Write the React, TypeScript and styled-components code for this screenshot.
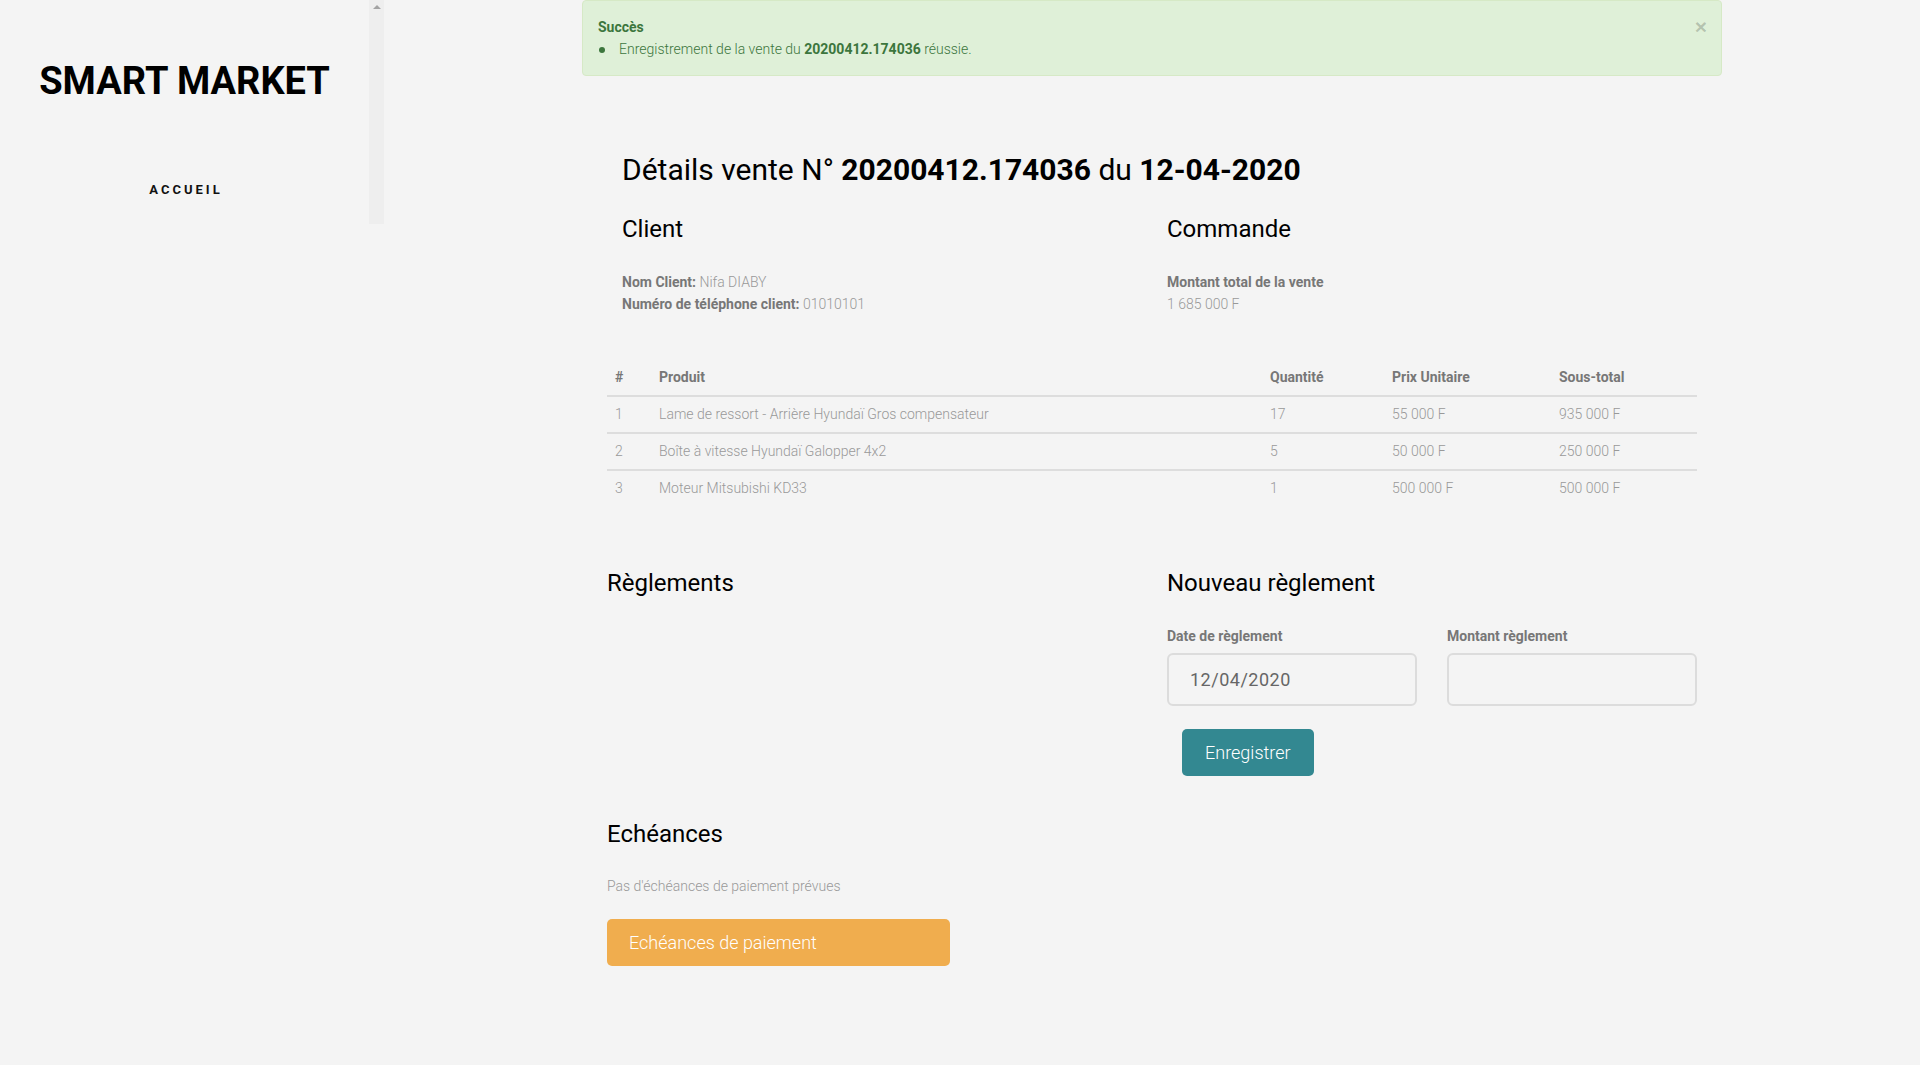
import styled, { createGlobalStyle } from 'styled-components';

const GlobalStyle = createGlobalStyle`
  html, body {
    margin: 0;
    padding: 0;
    background: #f4f4f4;
    font-family: Roboto, "Liberation Sans", sans-serif;
    color: #000;
  }
  * {
    box-sizing: border-box;
  }
`;

type Line = { id: number; name: string; qty: number; price: string; total: string };

const lines: Array<Line> = [
  { id: 1, name: 'Lame de ressort - Arrière Hyundaï Gros compensateur', qty: 17, price: '55 000 F', total: '935 000 F' },
  { id: 2, name: 'Boîte à vitesse Hyundaï Galopper 4x2', qty: 5, price: '50 000 F', total: '250 000 F' },
  { id: 3, name: 'Moteur Mitsubishi KD33', qty: 1, price: '500 000 F', total: '500 000 F' },
];

const columns = [
  { label: '#', width: 44 },
  { label: 'Produit', width: 611 },
  { label: 'Quantité', width: 122 },
  { label: 'Prix Unitaire', width: 167 },
  { label: 'Sous-total', width: 146 },
];

export default function App() {
  return (
    <>
      <GlobalStyle />
      <Page>
        <Sidebar />
        <Main>
          <Container>
            <SuccessAlert />
            <Content>
              <Title>
                Détails vente N° <strong>20200412.174036</strong> du <strong>12-04-2020</strong>
              </Title>
              <TwoCols>
                <Col $inset>
                  <SectionTitle>Client</SectionTitle>
                  <InfoLine>
                    <b>Nom Client:</b> Nifa DIABY
                  </InfoLine>
                  <InfoLine>
                    <b>Numéro de téléphone client:</b> 01010101
                  </InfoLine>
                </Col>
                <Col $inset>
                  <SectionTitle>Commande</SectionTitle>
                  <InfoLine>
                    <b>Montant total de la vente</b>
                  </InfoLine>
                  <InfoLine>1 685 000 F</InfoLine>
                </Col>
              </TwoCols>
              <LinesTable lines={lines} />
              <TwoCols>
                <Col>
                  <SectionTitle>Règlements</SectionTitle>
                </Col>
                <Col $inset>
                  <SectionTitle $gap={28}>Nouveau règlement</SectionTitle>
                  <FormGrid>
                    <Field>
                      <FieldLabel>Date de règlement</FieldLabel>
                      <TextInput defaultValue="12/04/2020" $spaced />
                    </Field>
                    <Field>
                      <FieldLabel>Montant règlement</FieldLabel>
                      <TextInput defaultValue="" />
                    </Field>
                  </FormGrid>
                  <Button $color="#338891" $indent>
                    Enregistrer
                  </Button>
                </Col>
              </TwoCols>
              <Schedules>
                <SectionTitle>Echéances</SectionTitle>
                <Muted>Pas d'échéances de paiement prévues</Muted>
                <Button $color="#f0ad4e" $wide>
                  Echéances de paiement
                </Button>
              </Schedules>
            </Content>
          </Container>
        </Main>
      </Page>
    </>
  );
}

const Sidebar = () => (
  <SideWrapper>
    <SideNav>
      <SideBody>
        <Brand>SMART MARKET</Brand>
        <NavLink>ACCUEIL</NavLink>
      </SideBody>
      <ScrollTrack>
        <ScrollArrow />
      </ScrollTrack>
    </SideNav>
  </SideWrapper>
);

const SuccessAlert = () => (
  <Alert>
    <AlertTitle>Succès</AlertTitle>
    <AlertList>
      <li>
        Enregistrement de la vente du <strong>20200412.174036</strong> réussie.
      </li>
    </AlertList>
    <CloseButton aria-label="close">×</CloseButton>
  </Alert>
);

const LinesTable = ({ lines }: { lines: Array<Line> }) => (
  <Table>
    <thead>
      <tr>
        {columns.map((c) => (
          <Th key={c.label} $width={c.width}>
            {c.label}
          </Th>
        ))}
      </tr>
    </thead>
    <tbody>
      {lines.map((l) => (
        <tr key={l.id}>
          <Td>{l.id}</Td>
          <Td>{l.name}</Td>
          <Td>{l.qty}</Td>
          <Td>{l.price}</Td>
          <Td>{l.total}</Td>
        </tr>
      ))}
    </tbody>
  </Table>
);

const Page = styled.div`
  display: flex;
  min-height: 1065px;
`;

const SideWrapper = styled.aside`
  width: 384px;
  flex-shrink: 0;
`;

const SideNav = styled.nav`
  display: flex;
  height: 224px;
`;

const SideBody = styled.div`
  flex: 1;
  display: flex;
  flex-direction: column;
  align-items: center;
  padding-top: 58px;
`;

const Brand = styled.h1`
  margin: 0;
  font-size: 38px;
  line-height: 46px;
  font-weight: 700;
  color: #000;
`;

const NavLink = styled.a`
  margin-top: 77px;
  padding-left: 3px;
  font-size: 13px;
  line-height: 18px;
  font-weight: 700;
  letter-spacing: 3px;
  color: #111;
  cursor: pointer;
`;

const ScrollTrack = styled.div`
  width: 15px;
  background: #eeeeee;
  display: flex;
  justify-content: center;
  padding-top: 5px;
`;

const ScrollArrow = styled.span`
  width: 0;
  height: 0;
  border-left: 4px solid transparent;
  border-right: 4px solid transparent;
  border-bottom: 4px solid #a3a3a3;
`;

const Main = styled.main`
  flex: 1;
`;

const Container = styled.div`
  width: 1140px;
  margin: 0 auto;
`;

const Alert = styled.div`
  position: relative;
  height: 76px;
  padding: 15px 15px;
  background: #dff0d8;
  border: 1px solid #d6e9c6;
  border-radius: 4px;
  color: #3c763d;
  font-size: 14px;
  line-height: 22px;
`;

const AlertTitle = styled.div`
  font-weight: 700;
`;

const AlertList = styled.ul`
  margin: 0;
  padding: 0;
  list-style: none;
  font-weight: 300;

  li::before {
    content: '';
    display: inline-block;
    width: 6px;
    height: 6px;
    margin: 0 14px 1px 1px;
    border-radius: 50%;
    background: currentColor;
    vertical-align: middle;
  }

  strong {
    font-weight: 700;
  }
`;

const CloseButton = styled.button`
  position: absolute;
  top: 15px;
  right: 14px;
  padding: 0;
  border: 0;
  background: none;
  font-family: "Liberation Sans", sans-serif;
  font-size: 21px;
  font-weight: 700;
  line-height: 1;
  color: rgba(0, 0, 0, 0.2);
  cursor: pointer;
`;

const Content = styled.div`
  padding: 0 25px;
`;

const Title = styled.h2`
  margin: 76px 0 27px;
  padding-left: 15px;
  font-size: 30px;
  line-height: 36px;
  font-weight: 400;

  strong {
    font-weight: 700;
  }
`;

const TwoCols = styled.div`
  display: grid;
  grid-template-columns: 545px 545px;
`;

const Col = styled.div<{ $inset?: boolean }>`
  padding-left: ${(p) => (p.$inset ? '15px' : '0')};
`;

const SectionTitle = styled.h4<{ $gap?: number }>`
  margin: 0 0 ${(p) => p.$gap ?? 27}px;
  font-size: 24px;
  line-height: 29px;
  font-weight: 400;
`;

const InfoLine = styled.div`
  font-size: 14px;
  line-height: 22px;
  font-weight: 300;
  color: #999;

  b {
    font-weight: 700;
    color: #777;
  }
`;

const Table = styled.table`
  width: 1090px;
  margin: 45px 0 63px;
  border-collapse: collapse;
  table-layout: fixed;
  font-size: 14px;
  line-height: 21px;
`;

const Th = styled.th<{ $width: number }>`
  width: ${(p) => p.$width}px;
  padding: 7px 8px;
  text-align: left;
  font-weight: 700;
  color: #777;
  border-bottom: 2px solid #dddddd;
`;

const Td = styled.td`
  padding: 7px 8px;
  font-weight: 300;
  color: #999;
  border-top: 2px solid #dddddd;
`;

const FormGrid = styled.div`
  display: grid;
  grid-template-columns: 250px 250px;
  column-gap: 30px;
  margin-bottom: 23px;
`;

const Field = styled.div`
  display: flex;
  flex-direction: column;
  gap: 6px;
`;

const FieldLabel = styled.label`
  font-size: 14px;
  line-height: 21px;
  font-weight: 700;
  color: #777;
`;

const TextInput = styled.input<{ $spaced?: boolean }>`
  height: 53px;
  padding: 0 21px;
  border: 2px solid #dcdcdc;
  border-radius: 6px;
  background: transparent;
  font-family: Roboto, "Liberation Sans", sans-serif;
  font-size: 18px;
  font-weight: 400;
  letter-spacing: ${(p) => (p.$spaced ? '0.5px' : '0')};
  color: #666;
  outline: none;
`;

const Button = styled.button<{ $color: string; $wide?: boolean; $indent?: boolean }>`
  display: block;
  height: 47px;
  width: ${(p) => (p.$wide ? '343px' : 'auto')};
  margin-left: ${(p) => (p.$indent ? '15px' : '0')};
  padding: 0 ${(p) => (p.$wide ? '22px' : '23px')};
  border: 0;
  border-radius: 5px;
  background: ${(p) => p.$color};
  color: #fff;
  font-family: Roboto, "Liberation Sans", sans-serif;
  font-size: 18px;
  font-weight: 300;
  text-align: left;
  cursor: pointer;
`;

const Schedules = styled.section`
  margin-top: 44px;
`;

const Muted = styled.p`
  margin: 0 0 22px;
  font-size: 14px;
  line-height: 21px;
  font-weight: 300;
  color: #999;
`;
